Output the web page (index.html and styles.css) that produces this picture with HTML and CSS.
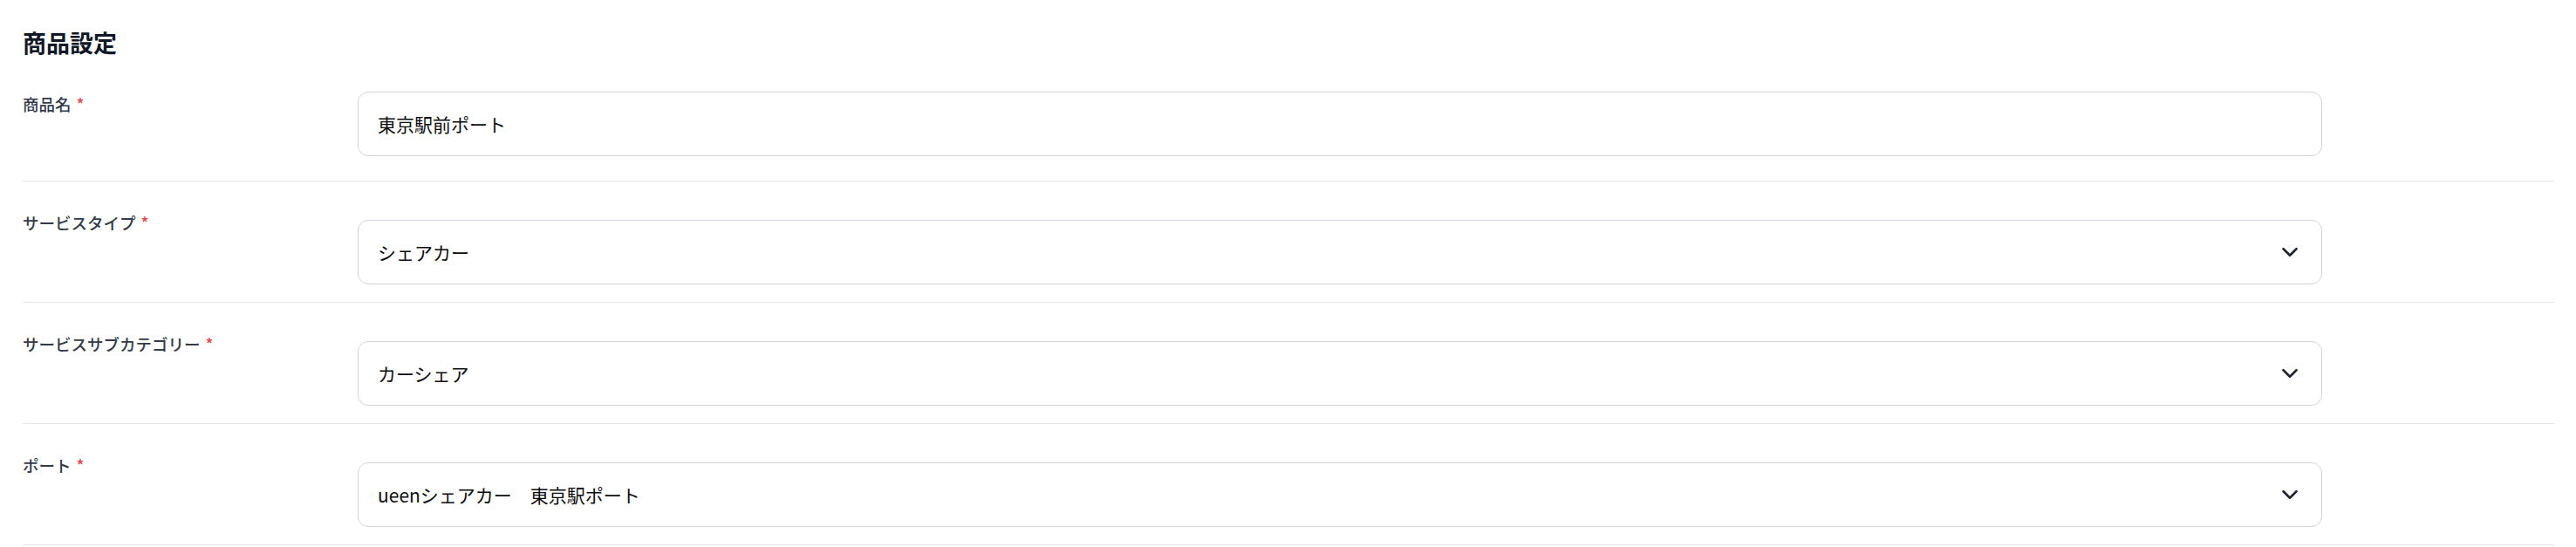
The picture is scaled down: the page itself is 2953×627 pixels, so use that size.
FILE: index.html
```html
<!DOCTYPE html>
<html lang="ja">
<head>
<meta charset="utf-8">
<title>商品設定</title>
<link rel="stylesheet" href="styles.css">
</head>
<body>
<div class="page">
  <h2 class="section-title">商品設定</h2>
  <div class="form">
    <div class="row row--first">
      <label class="label">商品名<span class="req">*</span></label>
      <div class="field">
        <div class="control">東京駅前ポート</div>
      </div>
    </div>
    <div class="row">
      <label class="label">サービスタイプ<span class="req">*</span></label>
      <div class="field field--select">
        <div class="control control--select">
          <span class="value">シェアカー</span>
          <svg class="chevron" width="24" height="24" viewBox="0 0 24 24" fill="none"><path d="M4.5 8.25 12 15.75 19.5 8.25" stroke="#1f2433" stroke-width="2.6" stroke-linecap="round" stroke-linejoin="round"/></svg>
        </div>
      </div>
    </div>
    <div class="row">
      <label class="label">サービスサブカテゴリー<span class="req">*</span></label>
      <div class="field field--select">
        <div class="control control--select">
          <span class="value">カーシェア</span>
          <svg class="chevron" width="24" height="24" viewBox="0 0 24 24" fill="none"><path d="M4.5 8.25 12 15.75 19.5 8.25" stroke="#1f2433" stroke-width="2.6" stroke-linecap="round" stroke-linejoin="round"/></svg>
        </div>
      </div>
    </div>
    <div class="row">
      <label class="label">ポート<span class="req">*</span></label>
      <div class="field field--select">
        <div class="control control--select">
          <span class="value">ueenシェアカー　東京駅ポート</span>
          <svg class="chevron" width="24" height="24" viewBox="0 0 24 24" fill="none"><path d="M4.5 8.25 12 15.75 19.5 8.25" stroke="#1f2433" stroke-width="2.6" stroke-linecap="round" stroke-linejoin="round"/></svg>
        </div>
      </div>
    </div>
  </div>
</div>
</body>
</html>
```

FILE: styles.css
```css
html, body {
  margin: 0;
  padding: 0;
  background: #ffffff;
}

body {
  font-family: "Noto Sans CJK JP", "Noto Sans", sans-serif;
  color: #111111;
}

.page {
  padding: 29px 25px 0 26px;
}

.section-title {
  margin: 0 0 36px 0;
  font-size: 27px;
  line-height: 40px;
  font-weight: 700;
  color: #111827;
}

.form {
  display: flex;
  flex-direction: column;
}

.row {
  display: grid;
  grid-template-columns: 384px minmax(0, 2252px);
  align-items: start;
  padding: 33px 0 20px 0;
  border-bottom: 1px solid #e4e6ea;
}

.row--first {
  padding: 0 0 28px 0;
}

.label {
  font-size: 18.5px;
  line-height: 27px;
  font-weight: 500;
  color: #333a48;
  padding-top: 1px;
}

.req {
  color: #e5484d;
  margin-left: 6px;
}

.field--select {
  margin-top: 11px;
}

.control {
  box-sizing: border-box;
  height: 74px;
  border: 1px solid #d3d5dd;
  border-radius: 12px;
  padding: 0 24px 0 22px;
  display: flex;
  align-items: center;
  font-size: 21px;
  color: #0d0d0d;
  background: #ffffff;
}

.control--select {
  justify-content: space-between;
}

.chevron {
  flex: none;
  display: block;
}
```
